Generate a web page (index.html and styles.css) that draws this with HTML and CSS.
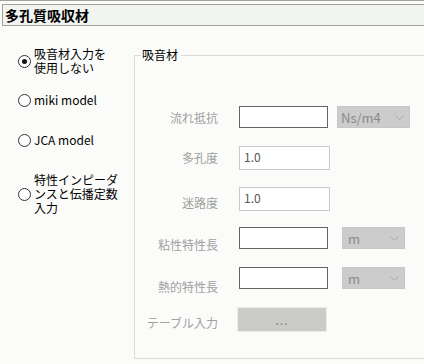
FILE: index.html
```html
<!doctype html>
<html lang="ja">
<head>
    <meta charset="UTF-8">
    <title>多孔質吸収材</title>
    <link rel="stylesheet" href="styles.css">
</head>
<body>
<div class="panel">
    <div class="title-bar"><span class="title">多孔質吸収材</span></div>
    <div class="main">
        <div class="options">
            <div class="opt">
                <span class="radio checked"></span>
                <span class="opt-text">吸音材入力を<br>使用しない</span>
            </div>
            <div class="opt opt-miki">
                <span class="radio"></span>
                <span class="opt-text">miki model</span>
            </div>
            <div class="opt opt-jca">
                <span class="radio"></span>
                <span class="opt-text">JCA model</span>
            </div>
            <div class="opt opt-imp">
                <span class="radio"></span>
                <span class="opt-text">特性インピーダ<br>ンスと伝播定数<br>入力</span>
            </div>
        </div>

        <fieldset class="group">
            <legend>吸音材</legend>
            <div class="rows">
                <div class="row">
                    <span class="lbl">流れ抵抗</span>
                    <span class="field"></span>
                    <span class="unit unit-wide">Ns/m4
                        <svg width="9" height="5" viewBox="0 0 9 5"><polyline points="0.5,0.5 4.5,4.5 8.5,0.5" fill="none" stroke="#aaa" stroke-width="1"/></svg>
                    </span>
                </div>
                <div class="row">
                    <span class="lbl">多孔度</span>
                    <span class="field field-light">1.0</span>
                </div>
                <div class="row">
                    <span class="lbl">迷路度</span>
                    <span class="field field-light">1.0</span>
                </div>
                <div class="row">
                    <span class="lbl">粘性特性長</span>
                    <span class="field"></span>
                    <span class="unit">m
                        <svg width="9" height="5" viewBox="0 0 9 5"><polyline points="0.5,0.5 4.5,4.5 8.5,0.5" fill="none" stroke="#aaa" stroke-width="1"/></svg>
                    </span>
                </div>
                <div class="row">
                    <span class="lbl">熱的特性長</span>
                    <span class="field"></span>
                    <span class="unit">m
                        <svg width="9" height="5" viewBox="0 0 9 5"><polyline points="0.5,0.5 4.5,4.5 8.5,0.5" fill="none" stroke="#aaa" stroke-width="1"/></svg>
                    </span>
                </div>
                <div class="row">
                    <span class="lbl">テーブル入力</span>
                    <span class="btn">...</span>
                </div>
            </div>
        </fieldset>
    </div>
</div>
</body>
</html>
```

FILE: styles.css
```css
body {
    margin: 0;
    background: #fbfcfa;
    font-family: "Noto Sans CJK JP", sans-serif;
    font-size: 12px;
    color: #000;
    overflow: hidden;
}
.panel {
    border-top: 1px solid #a0a0a0;
    height: 363px;
}
.title-bar {
    margin: 3px 0 0 2px;
    height: 20px;
    border: 1px solid #a0a0a0;
    border-right: 0;
    background: #f2f4f0;
    padding-left: 2px;
}
.title {
    font-size: 14px;
    font-weight: bold;
    line-height: 20px;
}
.main {
    display: flex;
}

/* 左側のラジオボタン */
.options {
    width: 134px;
    flex: none;
    box-sizing: border-box;
    padding: 21px 0 0 18px;
    display: flex;
    flex-direction: column;
}
.opt {
    display: flex;
    align-items: center;
    gap: 3px;
    line-height: 14px;
}
.opt-miki {
    margin-top: 18px;
}
.opt-jca {
    margin-top: 26px;
}
.opt-imp {
    margin-top: 26px;
}
.radio {
    width: 11px;
    height: 11px;
    border: 1px solid #333;
    border-radius: 50%;
    background: #fff;
    flex: none;
    display: flex;
    align-items: center;
    justify-content: center;
}
.radio.checked::after {
    content: "";
    width: 5px;
    height: 5px;
    border-radius: 50%;
    background: #111;
}

/* 吸音材グループ */
.group {
    flex: 1;
    min-width: 0;
    margin: 22px 0 0 0;
    padding: 0 0 11px 0;
    border: 1px solid #d9dbd8;
    border-right: 0;
}
.group legend {
    margin-left: 6px;
    padding: 0 3px 0 1px;
    line-height: 14px;
}
.rows {
    padding-top: 44px;
    display: flex;
    flex-direction: column;
}
.row {
    height: 40px;
    display: flex;
    align-items: flex-start;
}
.row:nth-child(2) {
    height: 41px;
}
.lbl {
    width: 83px;
    margin-right: 21px;
    text-align: right;
    color: #a0a0a0;
    line-height: 14px;
    padding-top: 5px;
}
.row:nth-child(3) .lbl,
.row:nth-child(6) .lbl {
    padding-top: 9px;
}
.row:nth-child(4) .lbl {
    padding-top: 11px;
}
.row:nth-child(5) .lbl {
    padding-top: 13px;
}
.field {
    width: 87px;
    height: 20px;
    border: 1px solid #646464;
    background: #fff;
}
.field-light {
    width: 85px;
    height: 18px;
    border-color: #cacaca;
    padding: 3px 0 1px 4px;
    line-height: 14px;
    color: #555;
}
.unit {
    margin-left: 14px;
    width: 51px;
    height: 20px;
    border: 1px solid #c6c6c6;
    background: #cccccc;
    color: #8a8a8a;
    font-size: 13px;
    padding: 0 5px 0 5px;
    display: flex;
    align-items: center;
    justify-content: space-between;
}
.unit-wide {
    margin-left: 9px;
    width: 63px;
    padding-left: 3px;
}
.btn {
    margin-left: -2px;
    width: 88px;
    height: 23px;
    border: 1px solid #ececea;
    background: #cbccc8;
    color: #7c8494;
    text-align: center;
    line-height: 24px;
    letter-spacing: 1px;
}
```
